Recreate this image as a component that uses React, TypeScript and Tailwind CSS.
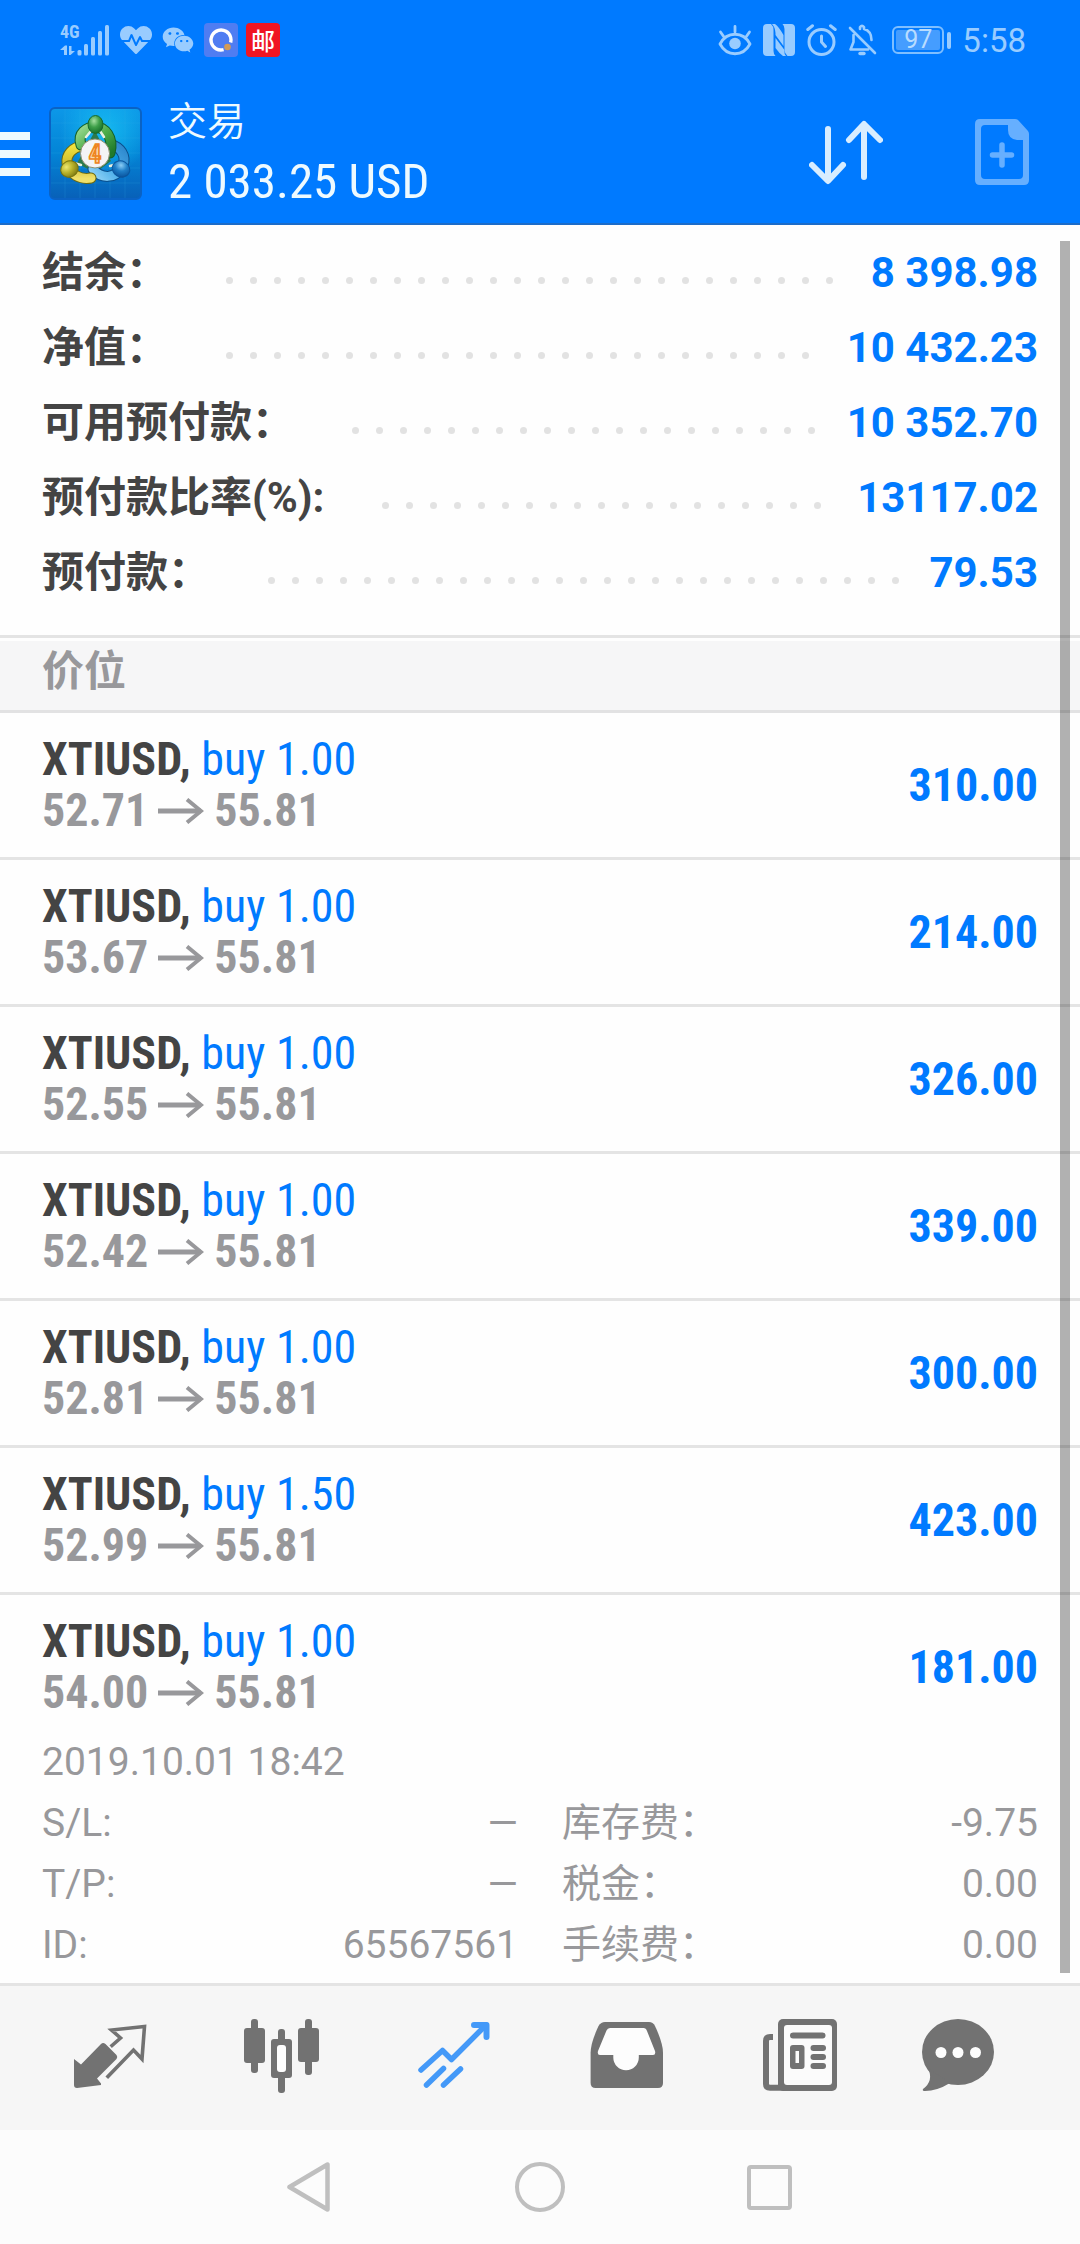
import type { ReactNode } from "react";
import { FaHeartbeat, FaWeixin } from "react-icons/fa";

const CONDENSED = "font-['Roboto_Condensed','Liberation_Sans_Narrow',Roboto,sans-serif]";

const summary = [
  { label: "结余：", value: "8 398.98" },
  { label: "净值：", value: "10 432.23" },
  { label: "可用预付款：", value: "10 352.70" },
  { label: "预付款比率(%):", value: "13117.02" },
  { label: "预付款：", value: "79.53" },
];

const positions = [
  { volume: "1.00", open: "52.71", profit: "310.00" },
  { volume: "1.00", open: "53.67", profit: "214.00" },
  { volume: "1.00", open: "52.55", profit: "326.00" },
  { volume: "1.00", open: "52.42", profit: "339.00" },
  { volume: "1.00", open: "52.81", profit: "300.00" },
  { volume: "1.50", open: "52.99", profit: "423.00" },
  { volume: "1.00", open: "54.00", profit: "181.00", expanded: true },
];

const details = [
  { label: "S/L:", value: "—" },
  { label: "库存费：", value: "-9.75" },
  { label: "T/P:", value: "—" },
  { label: "税金：", value: "0.00" },
  { label: "ID:", value: "65567561" },
  { label: "手续费：", value: "0.00" },
];

function Signal() {
  return (
    <svg width="50" height="32" viewBox="0 0 50 32" fill="currentColor" className="overflow-visible" aria-hidden="true">
      <text x="0" y="14" fontSize="18" fontWeight="700" className={CONDENSED}>4G</text>
      <path d="M0 26 L5 21.500 H7 V31 H4 V26Z M9 22 H11.500 V27 H15 L10.500 31 H9Z" />
      <rect x="17.500" y="26" width="4" height="5.500" rx="1.500" />
      <rect x="24" y="20" width="4" height="11.500" rx="1.500" />
      <rect x="31" y="13" width="4" height="18.500" rx="1.500" />
      <rect x="38" y="7" width="4" height="24.500" rx="1.500" />
      <rect x="45" y="1" width="4" height="30.500" rx="1.500" />
    </svg>
  );
}

function EyeIcon() {
  return (
    <svg width="34" height="32" viewBox="0 0 34 32" fill="none" stroke="currentColor" strokeWidth="2.800" strokeLinecap="round" strokeLinejoin="round" aria-hidden="true">
      <path d="M2 20 C9 7 25 7 32 20 C25 33 9 33 2 20Z" />
      <circle cx="17" cy="19.500" r="5.800" fill="currentColor" stroke="none" />
      <path d="M17 2.500V8 M2.500 8L6 13 M31.500 8L28 13" />
    </svg>
  );
}

function NfcIcon() {
  return (
    <svg width="32" height="32" viewBox="0 0 32 32" fill="currentColor" aria-hidden="true">
      <path d="M4 0 H8 Q10.500 2 10.500 6 V27 Q10.500 30 12.500 32 H4 Q0 32 0 28 V4 Q0 0 4 0Z" />
      <path d="M9 0 H12 Q16 3 20.500 11 V22 L12.500 11 V9 Q12 3 9 0Z" />
      <path d="M23 32 H20 Q16 29 12.500 24 V14 L21.500 26 Q21 30 23 32Z" />
      <path d="M28 32 H24.500 Q21.500 29 21.500 26 V5 Q21.500 2 19.500 0 H28 Q32 0 32 4 V28 Q32 32 28 32Z" />
    </svg>
  );
}

function AlarmIcon() {
  return (
    <svg width="31" height="32" viewBox="0 0 31 32" fill="none" stroke="currentColor" strokeWidth="3" strokeLinecap="round" strokeLinejoin="round" aria-hidden="true">
      <circle cx="15.500" cy="18" r="12.500" />
      <path d="M15.500 12V18L19.500 22.500 M1.800 5.500L6.500 1.800 M29.200 5.500L24.500 1.800" />
    </svg>
  );
}

function BellOffIcon() {
  return (
    <svg width="29" height="32" viewBox="0 0 29 32" fill="none" stroke="currentColor" strokeWidth="2.600" strokeLinecap="round" strokeLinejoin="round" aria-hidden="true">
      <path d="M2 4L27 29 M5.500 11V18L2.500 25.500H20 M12 5V3Q14 .800 16 3V5Q23.500 7 23.500 16" />
      <path d="M12 29.500H16" strokeWidth="3.400" />
    </svg>
  );
}

function StatusBar() {
  return (
    <div className="flex h-20 items-center justify-between pr-[54px] pl-[60px] text-[#99ccff]">
      <div className="flex items-center gap-[10px]">
        <Signal />
        <FaHeartbeat size={32} />
        <FaWeixin size={32} />
        <div className="flex gap-2">
          <svg width="34" height="34" viewBox="0 0 34 34" aria-hidden="true">
            <rect width="34" height="34" rx="4" fill="#4f7df2" />
            <circle cx="17" cy="17" r="10" fill="none" stroke="#fff" strokeWidth="3.400" strokeDasharray="52 11" transform="rotate(75 17 17)" />
            <circle cx="23.500" cy="24" r="3.300" fill="#d29a55" />
          </svg>
          <span className="flex size-[34px] items-center justify-center rounded bg-[#f01522] font-['Noto_Sans_CJK_SC',sans-serif] text-[24px] leading-none font-medium text-white">
            邮
          </span>
        </div>
      </div>
      <div className="flex items-center gap-[11px]">
        <EyeIcon />
        <NfcIcon />
        <AlarmIcon />
        <BellOffIcon />
        <div className="ml-1 flex items-center gap-[3px]">
          <div className="rounded-md border-2 border-[#7fbfff] p-[2px]">
            <div className="w-[44px] rounded-xs bg-[#459dff] text-center text-[25px] leading-[20px] text-[#b8dcff]">97</div>
          </div>
          <div className="h-[17px] w-1 rounded-full bg-[#99ccff]" />
        </div>
        <span className="text-[33px] leading-none">5:58</span>
      </div>
    </div>
  );
}

function Logo() {
  return (
    <svg width="93" height="93" viewBox="0 0 93 93" className="shrink-0" aria-hidden="true">
      <defs>
        <linearGradient id="tile" x1="0" y1="0" x2="0" y2="1">
          <stop offset="0" stopColor="#0d98e8" />
          <stop offset="0.500" stopColor="#0384d6" />
          <stop offset="1" stopColor="#0860b8" />
        </linearGradient>
        <radialGradient id="glow" cx="0.600" cy="0.250" r="0.500">
          <stop offset="0" stopColor="#18c4f4" stopOpacity="0.800" />
          <stop offset="1" stopColor="#18c4f4" stopOpacity="0" />
        </radialGradient>
        <linearGradient id="green" x1="0" y1="0" x2="1" y2="1">
          <stop offset="0" stopColor="#9bd98f" />
          <stop offset="0.500" stopColor="#4fae4c" />
          <stop offset="1" stopColor="#207a2c" />
        </linearGradient>
        <linearGradient id="yellow" x1="0" y1="0" x2="0" y2="1">
          <stop offset="0" stopColor="#f1e23d" />
          <stop offset="0.600" stopColor="#cdb92c" />
          <stop offset="1" stopColor="#efe06a" />
        </linearGradient>
        <linearGradient id="blue" x1="1" y1="0" x2="0" y2="1">
          <stop offset="0" stopColor="#2b86cc" />
          <stop offset="0.600" stopColor="#4fb0ea" />
          <stop offset="1" stopColor="#8fd2f6" />
        </linearGradient>
        <radialGradient id="headGreen" cx="0.400" cy="0.300" r="0.700">
          <stop offset="0" stopColor="#a6e0a0" />
          <stop offset="0.500" stopColor="#3fa04a" />
          <stop offset="1" stopColor="#17702a" />
        </radialGradient>
        <radialGradient id="headYellow" cx="0.400" cy="0.300" r="0.700">
          <stop offset="0" stopColor="#eee870" />
          <stop offset="0.500" stopColor="#b9b32c" />
          <stop offset="1" stopColor="#807c14" />
        </radialGradient>
        <radialGradient id="headBlue" cx="0.400" cy="0.300" r="0.700">
          <stop offset="0" stopColor="#8ccdf5" />
          <stop offset="0.500" stopColor="#1f7fc8" />
          <stop offset="1" stopColor="#0b56a0" />
        </radialGradient>
      </defs>
      <rect x="1" y="1" width="91" height="91" rx="5" fill="url(#tile)" stroke="#0a62c4" strokeWidth="2" />
      <rect x="2" y="2" width="89" height="89" rx="4" fill="url(#glow)" />
      <path d="M16 2V91M31 2V91M46 2V91M61 2V91M76 2V91M2 16H91M2 31H91M2 46H91M2 61H91M2 76H91" stroke="#36b0f0" strokeOpacity="0.180" />
      <path d="M46 24L62 54L46 66L28 56Z" fill="#2c7a4c" />
      <g fill="none" strokeLinecap="round" strokeLinejoin="round">
        <path d="M64 38C75 43 78 53 72 61C66 72 52 72 44 62" stroke="#0a4f8c" strokeWidth="11" />
        <path d="M64 38C75 43 78 53 72 61C66 72 52 72 44 62" stroke="url(#blue)" strokeWidth="9" />
        <path d="M34 39C23 40 17 48 18 56C20 67 31 73 42 71" stroke="#6c6a10" strokeWidth="11" />
        <path d="M34 39C23 40 17 48 18 56C20 67 31 73 42 71" stroke="url(#yellow)" strokeWidth="9" />
        <path d="M32 38C28 26 38 20 46 20C56 20 65 30 61 46" stroke="#14602a" strokeWidth="11" />
        <path d="M32 38C28 26 38 20 46 20C56 20 65 30 61 46" stroke="url(#green)" strokeWidth="9" />
        <path d="M37 30L42 24M55 30L51 24M25 56L32 58M68 57L61 59" stroke="#e8f0e0" strokeWidth="2.500" />
      </g>
      <ellipse cx="46.500" cy="17.500" rx="7.500" ry="9" fill="url(#headGreen)" stroke="#176a2b" />
      <ellipse cx="20.500" cy="62" rx="9" ry="8" fill="url(#headYellow)" stroke="#77740f" transform="rotate(-30 20.500 62)" />
      <ellipse cx="72" cy="62" rx="9" ry="8" fill="url(#headBlue)" stroke="#0c559c" transform="rotate(30 72 62)" />
      <circle cx="46" cy="46.500" r="14.500" fill="#f4f4f6" stroke="#8b8f70" strokeWidth="1" />
      <text x="46" y="55.500" textAnchor="middle" fontSize="25" fontWeight="700" fill="#fbd9a8" stroke="#ee8420" strokeWidth="1.600" className={CONDENSED}>4</text>
    </svg>
  );
}

function Header() {
  return (
    <header className="border-b-2 border-[#1c6cc8] bg-[#007aff] font-[Roboto,'Noto_Sans_CJK_SC',sans-serif]">
      <StatusBar />
      <div className="flex items-center pr-[51px] pb-[26px] pt-[27px] text-[#eefaff]">
        <button type="button" aria-label="菜单" className="flex w-[30px] flex-col gap-[10px] pt-1">
          <span className="h-2 bg-[#eefaff]" />
          <span className="h-2 bg-[#eefaff]" />
          <span className="h-2 bg-[#eefaff]" />
        </button>
        <div className="ml-[19px] h-[90px]">
          <Logo />
        </div>
        <div className="-my-4 ml-[26px] flex-1">
          <h1 className="text-[39px] leading-[60px] font-[350]">交易</h1>
          <p className={`${CONDENSED} text-[49px] leading-[60px]`}>2 033.25 USD</p>
        </div>
        <button type="button" aria-label="排序" className="mr-[92px] text-[#d8edff]">
          <svg width="74" height="66" viewBox="0 0 74 66" fill="none" stroke="currentColor" strokeWidth="6" strokeLinecap="round" strokeLinejoin="round" aria-hidden="true">
            <path d="M19 10V61 M3 46L19 62L34 46" />
            <path d="M55 58V6 M40 21L55 5L71 21" />
          </svg>
        </button>
        <button type="button" aria-label="新订单" className="text-[#66afff]">
          <svg width="54" height="66" viewBox="0 0 54 66" fill="none" aria-hidden="true">
            <path fill="currentColor" fillRule="evenodd" d="M5 0H40Q42 0 43.500 1.500L53 12Q54 13.500 54 15V61Q54 66 49 66H5Q0 66 0 61V5Q0 0 5 0Z M10 6Q6 6 6 10V56Q6 60 10 60H44Q48 60 48 56V21H42Q33 20 33 11V6Z" />
            <path d="M27 26V46 M17.500 36H36.500" stroke="currentColor" strokeWidth="5.500" strokeLinecap="round" />
          </svg>
        </button>
      </div>
    </header>
  );
}

function Leader() {
  return (
    <div aria-hidden="true" className="mt-[15px] mr-[6px] ml-[58px] flex h-[7px] flex-1 flex-wrap overflow-hidden">
      {Array.from({ length: 60 }, (_, i) => (
        <span key={i} className="mr-[17px] size-[7px] rounded-full bg-[#e2e2e2]" />
      ))}
    </div>
  );
}

function LongArrow() {
  return (
    <svg width="46" height="26" viewBox="0 0 46 26" fill="none" stroke="currentColor" aria-hidden="true">
      <path d="M0 13H43" strokeWidth="5" />
      <path d="M29 1.500L43 13L29 24.500" strokeWidth="4" />
    </svg>
  );
}

function Position({ p }: { p: (typeof positions)[number] }) {
  return (
    <li className="border-b-[3px] border-[#e4e4e4] px-[42px] pt-[21px] pb-[21px] last:border-b-0 last:pb-[7px]">
      <div className={`flex items-center justify-between text-[46px] leading-[51px] ${CONDENSED}`}>
        <div>
          <div className="text-[#007aff]">
            <b className="font-bold text-[#444]">XTIUSD,</b> buy {p.volume}
          </div>
          <div className="flex items-center gap-[10px] font-bold text-[#98989b]">
            <span>{p.open}</span>
            <LongArrow />
            <span>55.81</span>
          </div>
        </div>
        <div className="font-bold text-[#007aff]">{p.profit}</div>
      </div>
      {p.expanded && (
        <div className="pt-[14px] text-[39px] leading-[61px] text-[#98989b]">
          <div>2019.10.01 18:42</div>
          <dl className="grid grid-cols-2 gap-x-[44px]">
            {details.map((d) => (
              <div key={d.label} className="flex justify-between">
                <dt>{d.label}</dt>
                <dd>{d.value}</dd>
              </div>
            ))}
          </dl>
        </div>
      )}
    </li>
  );
}

function Tab({ label, active, children }: { label: string; active?: boolean; children: ReactNode }) {
  return (
    <button type="button" aria-label={label} className={`flex flex-1 justify-center py-8 ${active ? "text-[#4499f8]" : "text-[#727272]"}`}>
      <svg width="96" height="80" viewBox="0 0 96 80" fill="currentColor" aria-hidden="true">
        {children}
      </svg>
    </button>
  );
}

function TabBar() {
  return (
    <nav className="flex border-t-[3px] border-[#e4e4e4] bg-[#f6f6f6] px-6">
      <Tab label="行情">
        <path d="M12 41L19 46.500L39 26Q41 24 43.500 26L54.500 37Q56 39 54.500 41L35 60.500L39 65.500V67L15 70Q12 70 12 67Z" strokeLinejoin="round" />
        <path d="M50 27.500L58.500 20L49.500 12L82.500 8.500L80 41L71.500 32L46 58.500" fill="none" stroke="currentColor" strokeWidth="3.600" strokeLinecap="square" />
      </Tab>
      <Tab label="图表">
        <rect x="17" y="1" width="7" height="54" rx="3" />
        <rect x="10" y="10" width="21" height="35" rx="3" />
        <rect x="71" y="1" width="7" height="56" rx="3" />
        <rect x="64" y="10" width="21" height="34" rx="3" />
        <rect x="44" y="11" width="7" height="64" rx="3" />
        <rect x="37" y="21" width="21" height="39" rx="3" />
        <rect x="43" y="27" width="9" height="27" rx="3" fill="#fdfdfd" />
      </Tab>
      <Tab label="交易" active>
        <g fill="none" stroke="currentColor" strokeWidth="5.500" strokeLinecap="round" strokeLinejoin="round">
          <path d="M15 52L36.500 32.500L45.500 41.500L80 7" />
          <path d="M68 7H80.500V19" strokeWidth="6" />
          <path d="M20.500 67L37.500 50.500M37.500 67L54.500 51" />
        </g>
      </Tab>
      <Tab label="历史">
        <path d="M27 4H71Q75 4 77 8Q85 25 85 35V65Q85 70 80 70H17.600Q12.600 70 12.600 65V35Q12.600 25 20.500 8Q23 4 27 4Z" />
        <path fill="#fdfdfd" d="M32 10Q29.500 10 28.500 12.500L20 33Q19 37 22 37H35.300V39.500A12.700 12.700 0 0 0 60.800 39.500V37H75Q78 37 77 33L69 13Q68 10 65.500 10Z" />
      </Tab>
      <Tab label="新闻">
        <rect x="28" y="1" width="59" height="72" rx="5" />
        <rect x="34" y="7" width="48" height="60" rx="3" fill="#fbfbfb" />
        <path d="M23 19H20Q16 19 16 23V66Q16 69.800 20 69.800H34" fill="none" stroke="currentColor" strokeWidth="6" />
        <rect x="40" y="14.500" width="35.500" height="6" rx="3" />
        <rect x="40" y="27" width="14.500" height="24" rx="3" />
        <rect x="45.500" y="33" width="3.500" height="12" fill="#fbfbfb" />
        <rect x="60.500" y="27" width="15.500" height="6" rx="3" />
        <rect x="60.500" y="36" width="15.500" height="6" rx="3" />
        <rect x="60.500" y="45" width="15.500" height="6" rx="3" />
      </Tab>
      <Tab label="消息">
        <ellipse cx="36" cy="34" rx="36" ry="33" />
        <path d="M6 50Q12 63 1 71Q0 73 3 73Q15 73 28 65Z" />
        <g fill="#fdfdfd">
          <circle cx="19" cy="34.500" r="5.500" />
          <circle cx="36" cy="34.500" r="5.500" />
          <circle cx="53.500" cy="34.500" r="5.500" />
        </g>
      </Tab>
    </nav>
  );
}

function SystemNav() {
  return (
    <div className="flex justify-center gap-[179px] bg-[#fcfcfc] py-8 text-[#bfbfbf]">
      <button type="button" aria-label="返回">
        <svg width="50" height="50" viewBox="0 0 50 50" fill="none" stroke="currentColor" strokeWidth="4.500" strokeLinejoin="round" aria-hidden="true">
          <path d="M3.500 25L41.500 2.500V47.500Z" />
        </svg>
      </button>
      <button type="button" aria-label="主页" className="size-[50px] rounded-full border-[4px] border-[#bfbfbf]" />
      <button type="button" aria-label="最近任务" className="flex size-[50px] items-center justify-center">
        <span className="size-[45px] rounded-sm border-[4px] border-[#bfbfbf]" />
      </button>
    </div>
  );
}

export default function App() {
  return (
    <div lang="zh-CN" className="flex min-h-screen flex-col bg-[#fefefe] font-[Roboto,'Noto_Sans_CJK_SC',sans-serif]">
      <Header />
      <main className="relative flex-1">
        <dl className="border-b-[3px] border-[#e4e4e4] px-[42px] pt-[10px] pb-[25px] text-[42px] leading-[75px]">
          {summary.map((s) => (
            <div key={s.label} className="flex items-center">
              <dt className="shrink-0 font-bold text-[#444]">{s.label}</dt>
              <Leader />
              <dd className="shrink-0 font-bold text-[#007aff]">{s.value}</dd>
            </div>
          ))}
        </dl>
        <h2 className="mt-[3px] border-b-[3px] border-[#e2e2e3] bg-[#f6f6f7] px-[42px] pb-[7px] text-[42px] leading-[62px] font-bold text-[#98989b]">
          价位
        </h2>
        <ul>
          {positions.map((p) => (
            <Position key={p.open} p={p} />
          ))}
        </ul>
        <div aria-hidden="true" className="absolute top-4 right-[10px] bottom-[10px] w-[10px] bg-black/30" />
      </main>
      <TabBar />
      <SystemNav />
    </div>
  );
}
